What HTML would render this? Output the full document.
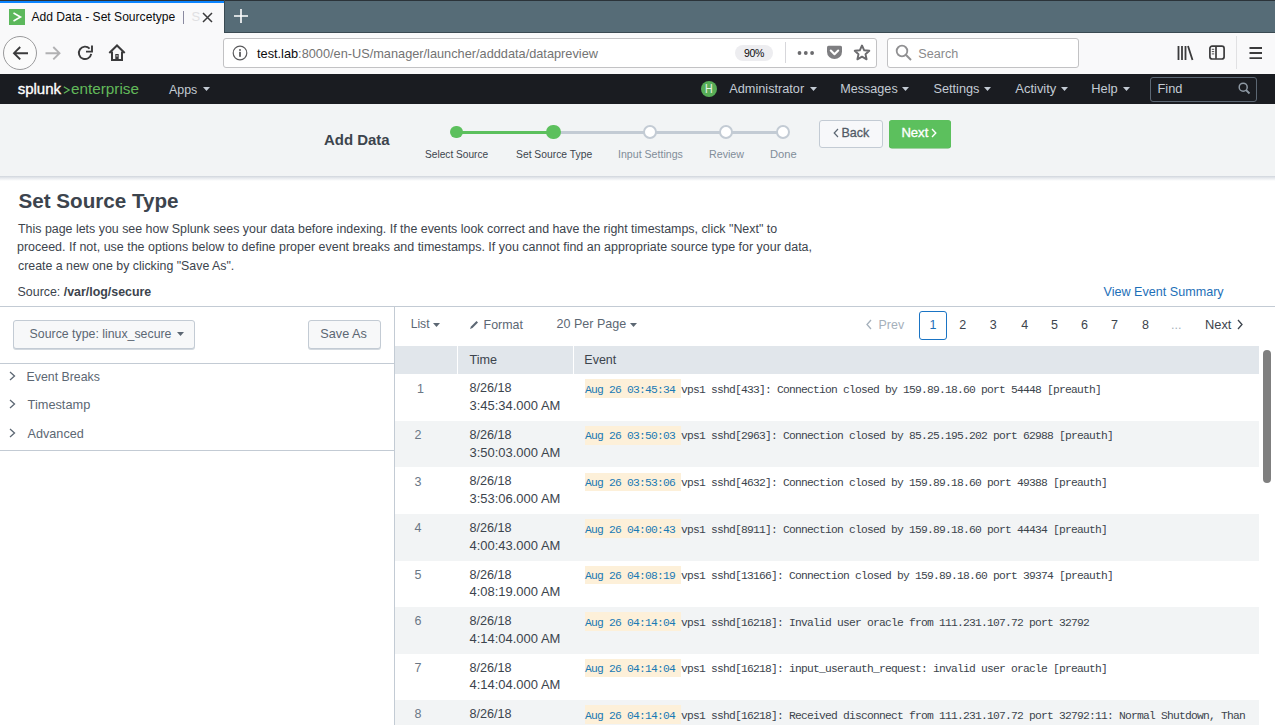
<!DOCTYPE html><html><head><meta charset="utf-8"><style>html,body{margin:0;padding:0;width:1275px;height:725px;overflow:hidden;background:#fff;position:relative}.t{position:absolute;white-space:nowrap;line-height:1;margin:0}</style></head><body><div style="position:absolute;left:0px;top:0px;width:1275px;height:33px;background:#566c77"></div><div style="position:absolute;left:0px;top:0px;width:1275px;height:1px;background:#2b3339"></div><div style="position:absolute;left:224px;top:32px;width:1051px;height:1px;background:#3a4a52"></div><div style="position:absolute;left:0px;top:0px;width:224px;height:33px;background:#f9f9fa"></div><div style="position:absolute;left:0px;top:1px;width:224px;height:2px;background:#0a84ff"></div><div style="position:absolute;left:0px;top:0px;width:224px;height:1px;background:#2b3339"></div><div style="position:absolute;left:224px;top:0px;width:1px;height:33px;background:#3a4a52"></div><div style="position:absolute;left:9px;top:9px;width:16px;height:16px;background:#5cb85c"></div><svg style="position:absolute;left:9px;top:9px;" width="16" height="16" viewBox="0 0 16 16"><path d="M4.5 4 L11.5 8 L4.5 12" fill="none" stroke="#fff" stroke-width="1.6"/></svg><div style="position:absolute;left:182.5px;top:11px;width:1.2px;height:13px;background:#8a8aa0"></div><svg style="position:absolute;left:202px;top:12px;" width="11" height="11" viewBox="0 0 11 11"><path d="M1 1 L10 10 M10 1 L1 10" stroke="#3b3b3c" stroke-width="1.5"/></svg><svg style="position:absolute;left:234px;top:9px;" width="14" height="14" viewBox="0 0 14 14"><path d="M7 0 V14 M0 7 H14" stroke="#fff" stroke-width="1.6"/></svg><div style="position:absolute;left:0px;top:33px;width:1275px;height:41px;background:#f9f9fa"></div><div style="position:absolute;left:3px;top:36px;width:34px;height:34px;border:1px solid #9a9a9c;border-radius:50%;background:#fbfbfb;box-sizing:border-box"></div><svg style="position:absolute;left:12px;top:46px;" width="17" height="15" viewBox="0 0 17 15"><path d="M2 7.2 H16 M8.2 1 L2 7.2 L8.2 13.4" fill="none" stroke="#3b3b3c" stroke-width="1.9"/></svg><svg style="position:absolute;left:45px;top:46px;" width="17" height="15" viewBox="0 0 17 15"><path d="M0.5 7.2 H14.5 M8.3 1 L14.5 7.2 L8.3 13.4" fill="none" stroke="#b1b1b3" stroke-width="1.9"/></svg><svg style="position:absolute;left:77px;top:44px;" width="17" height="17" viewBox="0 0 17 17"><path d="M14.2 9.8 A6.2 6.2 0 1 1 12.6 4.6" fill="none" stroke="#3b3b3c" stroke-width="1.9"/><path d="M15 1.5 V7.6 H9" fill="none" stroke="#3b3b3c" stroke-width="1.9"/></svg><svg style="position:absolute;left:108px;top:44px;" width="18" height="18" viewBox="0 0 18 18"><path d="M1.3 9 L9 1.5 L16.7 9" fill="none" stroke="#3b3b3c" stroke-width="2"/><path d="M4 7.5 V16 H14 V7.5" fill="none" stroke="#3b3b3c" stroke-width="2"/><rect x="7.3" y="10" width="3.4" height="6" fill="#3b3b3c"/><rect x="8.4" y="11.3" width="1.2" height="1.2" fill="#fff"/></svg><div style="position:absolute;left:223px;top:38px;width:654px;height:30px;border:1px solid #c2c2c4;border-radius:3px;background:#fff;box-sizing:border-box"></div><svg style="position:absolute;left:232px;top:45px;" width="16" height="16" viewBox="0 0 16 16"><circle cx="8" cy="8" r="6.8" fill="none" stroke="#5a5a5c" stroke-width="1.2"/><circle cx="8" cy="4.9" r="1" fill="#5a5a5c"/><rect x="7.1" y="6.8" width="1.8" height="5" fill="#5a5a5c"/></svg><div style="position:absolute;left:735px;top:45px;width:38px;height:16px;border-radius:8px;background:#ededf0"></div><div style="position:absolute;left:785px;top:42px;width:1px;height:21px;background:#d7d7db"></div><svg style="position:absolute;left:797px;top:49px;" width="18" height="8" viewBox="0 0 18 8"><circle cx="2.5" cy="4" r="1.9" fill="#6b6b6e"/><circle cx="8.8" cy="4" r="1.9" fill="#6b6b6e"/><circle cx="15.1" cy="4" r="1.9" fill="#6b6b6e"/></svg><svg style="position:absolute;left:825.5px;top:45px;" width="17" height="15" viewBox="0 0 17 15"><path d="M1 2.3 Q1 0.8 2.5 0.8 H14.5 Q16 0.8 16 2.3 V6.8 A7.5 7.3 0 0 1 1 6.8 Z" fill="#7e7e81"/><path d="M4.8 5.6 L8.5 9.2 L12.2 5.6" fill="none" stroke="#fff" stroke-width="2.1" stroke-linecap="round" stroke-linejoin="round"/></svg><svg style="position:absolute;left:853px;top:44px;" width="18" height="17" viewBox="0 0 18 17"><path d="M9 1.5 L11.2 6.3 L16.3 6.8 L12.5 10.2 L13.6 15.3 L9 12.7 L4.4 15.3 L5.5 10.2 L1.7 6.8 L6.8 6.3 Z" fill="none" stroke="#6b6b6e" stroke-width="1.9" stroke-linejoin="round"/></svg><div style="position:absolute;left:887px;top:38px;width:192px;height:30px;border:1px solid #c2c2c4;border-radius:3px;background:#fff;box-sizing:border-box"></div><svg style="position:absolute;left:895px;top:44px;" width="18" height="18" viewBox="0 0 18 18"><circle cx="7" cy="7" r="5.3" fill="none" stroke="#909092" stroke-width="1.8"/><path d="M10.8 10.8 L16 16" stroke="#909092" stroke-width="2"/></svg><svg style="position:absolute;left:1177px;top:45px;" width="17" height="16" viewBox="0 0 17 16"><path d="M1.5 1 V15 M5 1 V15 M8.5 1 V15 M11 1 L15.5 15" fill="none" stroke="#3b3b3c" stroke-width="1.8"/></svg><svg style="position:absolute;left:1208px;top:45px;" width="18" height="16" viewBox="0 0 18 16"><rect x="1.9" y="1.2" width="14.2" height="12.8" rx="2.3" fill="none" stroke="#3b3b3c" stroke-width="1.7"/><path d="M8 1.5 V13.8" stroke="#3b3b3c" stroke-width="1.7"/><path d="M3.8 4.3 H6.2 M3.8 6.6 H6.2 M3.8 8.9 H6.2" stroke="#3b3b3c" stroke-width="0.9"/></svg><div style="position:absolute;left:1236px;top:36px;width:1px;height:33px;background:#e1e1e3"></div><svg style="position:absolute;left:1249px;top:46px;" width="14" height="14" viewBox="0 0 14 14"><path d="M0.5 2 H13 M0.5 7 H13 M0.5 12.2 H13" stroke="#3b3b3c" stroke-width="1.8"/></svg><div style="position:absolute;left:0px;top:74px;width:1275px;height:30px;background:#1a1c21"></div><svg style="position:absolute;left:63px;top:86px;" width="7" height="8" viewBox="0 0 7 8"><path d="M0.8 0.8 L6.2 4 L0.8 7.2" fill="none" stroke="#62b95a" stroke-width="1.2"/></svg><svg style="position:absolute;left:202.5px;top:87px;" width="7" height="4" viewBox="0 0 7 4"><path d="M0 0 H7 L3.5 4 Z" fill="#c3cbd4"/></svg><div style="position:absolute;left:701px;top:81px;width:16px;height:16px;background:#57ad57;border-radius:50%"></div><svg style="position:absolute;left:810px;top:87px;" width="7" height="4" viewBox="0 0 7 4"><path d="M0 0 H7 L3.5 4 Z" fill="#c3cbd4"/></svg><svg style="position:absolute;left:902px;top:87px;" width="7" height="4" viewBox="0 0 7 4"><path d="M0 0 H7 L3.5 4 Z" fill="#c3cbd4"/></svg><svg style="position:absolute;left:984px;top:87px;" width="7" height="4" viewBox="0 0 7 4"><path d="M0 0 H7 L3.5 4 Z" fill="#c3cbd4"/></svg><svg style="position:absolute;left:1061px;top:87px;" width="7" height="4" viewBox="0 0 7 4"><path d="M0 0 H7 L3.5 4 Z" fill="#c3cbd4"/></svg><svg style="position:absolute;left:1122.5px;top:87px;" width="7" height="4" viewBox="0 0 7 4"><path d="M0 0 H7 L3.5 4 Z" fill="#c3cbd4"/></svg><div style="position:absolute;left:1150px;top:77px;width:107px;height:25px;border:1px solid #5c6773;border-radius:3px;box-sizing:border-box"></div><svg style="position:absolute;left:1238px;top:82px;" width="13" height="13" viewBox="0 0 13 13"><circle cx="5.2" cy="5.2" r="4" fill="none" stroke="#8e99a4" stroke-width="1.5"/><path d="M8 8 L11.5 11.5" stroke="#8e99a4" stroke-width="1.8"/></svg><div style="position:absolute;left:0px;top:104px;width:1275px;height:72px;background:#f2f4f5"></div><div style="position:absolute;left:0px;top:176px;width:1275px;height:5px;background:linear-gradient(#d0d5dc,#e6e9ed 40%,#fff)"></div><div style="position:absolute;left:456px;top:130.5px;width:97px;height:3px;background:#5cc05d"></div><div style="position:absolute;left:553px;top:130.5px;width:230px;height:3px;background:#c3cbd4"></div><div style="position:absolute;left:450.1px;top:125.6px;width:12.8px;height:12.8px;border-radius:50%;background:#5cc05d"></div><div style="position:absolute;left:545.9px;top:124.6px;width:14.8px;height:14.8px;border-radius:50%;background:#5cc05d"></div><div style="position:absolute;left:642.7px;top:125px;width:14px;height:14px;border-radius:50%;background:#fff;border:2.2px solid #c3cbd4;box-sizing:border-box"></div><div style="position:absolute;left:718.6px;top:125px;width:14px;height:14px;border-radius:50%;background:#fff;border:2.2px solid #c3cbd4;box-sizing:border-box"></div><div style="position:absolute;left:775.7px;top:125px;width:14px;height:14px;border-radius:50%;background:#fff;border:2.2px solid #c3cbd4;box-sizing:border-box"></div><div style="position:absolute;left:819px;top:120px;width:64px;height:28px;border:1px solid #c3cbd4;border-radius:3px;background:#f7f8fa;box-sizing:border-box"></div><svg style="position:absolute;left:832.5px;top:127.5px;" width="6" height="10" viewBox="0 0 6 10"><path d="M5 1 L1.2 5 L5 9" fill="none" stroke="#5c6773" stroke-width="1.2"/></svg><div style="position:absolute;left:889px;top:120px;width:62px;height:28px;border-radius:3px;background:#5cc05d;box-shadow:0 0.6px 0 #4fae4f"></div><svg style="position:absolute;left:931px;top:127.5px;" width="6" height="10" viewBox="0 0 6 10"><path d="M1 1 L4.8 5 L1 9" fill="none" stroke="#fff" stroke-width="1.4"/></svg><div style="position:absolute;left:0px;top:306px;width:1275px;height:1px;background:#c3cbd4"></div><div style="position:absolute;left:394px;top:307px;width:1px;height:418px;background:#c3cbd4"></div><div style="position:absolute;left:13px;top:320px;width:182px;height:28.6px;border:1px solid #c3cbd4;border-radius:3px;background:#f7f8f9;box-sizing:border-box;box-shadow:0 1px 0 #d3d9df"></div><svg style="position:absolute;left:176.5px;top:332px;" width="7" height="4" viewBox="0 0 7 4"><path d="M0 0 H7 L3.5 4 Z" fill="#5c6773"/></svg><div style="position:absolute;left:308px;top:320px;width:73px;height:28.6px;border:1px solid #c3cbd4;border-radius:3px;background:#f7f8f9;box-sizing:border-box;box-shadow:0 1px 0 #d3d9df"></div><div style="position:absolute;left:0px;top:363px;width:394px;height:1px;background:#c3cbd4"></div><svg style="position:absolute;left:9px;top:370.5px;" width="7" height="10" viewBox="0 0 7 10"><path d="M1 1 L5.5 5 L1 9" fill="none" stroke="#5c6773" stroke-width="1.3"/></svg><svg style="position:absolute;left:9px;top:399.4px;" width="7" height="10" viewBox="0 0 7 10"><path d="M1 1 L5.5 5 L1 9" fill="none" stroke="#5c6773" stroke-width="1.3"/></svg><svg style="position:absolute;left:9px;top:428.4px;" width="7" height="10" viewBox="0 0 7 10"><path d="M1 1 L5.5 5 L1 9" fill="none" stroke="#5c6773" stroke-width="1.3"/></svg><div style="position:absolute;left:0px;top:450px;width:394px;height:1px;background:#c3cbd4"></div><svg style="position:absolute;left:433px;top:322.5px;" width="7" height="4" viewBox="0 0 7 4"><path d="M0 0 H7 L3.5 4 Z" fill="#5c6773"/></svg><svg style="position:absolute;left:469px;top:320px;" width="10" height="10" viewBox="0 0 10 10"><path d="M1 9 L2 6.5 L7.5 1 L9 2.5 L3.5 8 Z" fill="#5c6773"/></svg><svg style="position:absolute;left:630px;top:322.5px;" width="7" height="4" viewBox="0 0 7 4"><path d="M0 0 H7 L3.5 4 Z" fill="#5c6773"/></svg><svg style="position:absolute;left:866px;top:319px;" width="6" height="11" viewBox="0 0 6 11"><path d="M5 1 L1 5.5 L5 10" fill="none" stroke="#a5b0bb" stroke-width="1.3"/></svg><div style="position:absolute;left:919px;top:311px;width:28px;height:29px;border:1.5px solid #1a74c4;border-radius:3px;box-sizing:border-box"></div><svg style="position:absolute;left:1237px;top:319px;" width="6" height="11" viewBox="0 0 6 11"><path d="M1 1 L5 5.5 L1 10" fill="none" stroke="#3c444d" stroke-width="1.3"/></svg><div style="position:absolute;left:395px;top:346px;width:864px;height:28.4px;background:#e1e6eb"></div><div style="position:absolute;left:457px;top:346px;width:1px;height:28.4px;background:#fff"></div><div style="position:absolute;left:573px;top:346px;width:1px;height:28.4px;background:#fff"></div><div style="position:absolute;left:585px;top:379.4px;width:96px;height:18.7px;background:#fdf0d9"></div><div style="position:absolute;left:395px;top:420.95px;width:864px;height:46.55px;background:#f2f4f5"></div><div style="position:absolute;left:585px;top:425.95px;width:96px;height:18.7px;background:#fdf0d9"></div><div style="position:absolute;left:585px;top:472.5px;width:96px;height:18.7px;background:#fdf0d9"></div><div style="position:absolute;left:395px;top:514.05px;width:864px;height:46.55px;background:#f2f4f5"></div><div style="position:absolute;left:585px;top:519.05px;width:96px;height:18.7px;background:#fdf0d9"></div><div style="position:absolute;left:585px;top:565.6px;width:96px;height:18.7px;background:#fdf0d9"></div><div style="position:absolute;left:395px;top:607.15px;width:864px;height:46.55px;background:#f2f4f5"></div><div style="position:absolute;left:585px;top:612.15px;width:96px;height:18.7px;background:#fdf0d9"></div><div style="position:absolute;left:585px;top:658.7px;width:96px;height:18.7px;background:#fdf0d9"></div><div style="position:absolute;left:395px;top:700.25px;width:864px;height:46.55px;background:#f2f4f5"></div><div style="position:absolute;left:585px;top:705.25px;width:96px;height:18.7px;background:#fdf0d9"></div><div style="position:absolute;left:1263px;top:350px;width:8px;height:133px;background:#7f7f7f;border-radius:4px"></div><div class="t" id="t0" style="left:31.40px;top:10.56px;font-family:'Liberation Sans', sans-serif;font-size:12.103px;font-weight:400;color:#0c0c0d;">Add Data - Set Sourcetype</div><div class="t" id="t1" style="left:191.50px;top:9.80px;font-family:'Liberation Sans', sans-serif;font-size:13.000px;font-weight:400;color:#e0e0e2;">S</div><div class="t" id="t2" style="left:257.00px;top:47.70px;font-family:'Liberation Sans', sans-serif;font-size:12.761px;font-weight:400;color:#0c0c0d;">test.lab<span style="color:#737373">:8000/en-US/manager/launcher/adddata/datapreview</span></div><div class="t" id="t3" style="left:744.00px;top:47.71px;font-family:'Liberation Sans', sans-serif;font-size:10.500px;font-weight:400;color:#0c0c0d;letter-spacing:-0.4px">90%</div><div class="t" id="t4" style="left:918.33px;top:48.33px;font-family:'Liberation Sans', sans-serif;font-size:12.610px;font-weight:400;color:#8a8a8c;">Search</div><div class="t" id="t5" style="left:17.66px;top:81.27px;font-family:'Liberation Sans', sans-serif;font-size:15.040px;font-weight:400;color:#fff;-webkit-text-stroke:0.35px #fff">splunk</div><div class="t" id="t6" style="left:71.00px;top:81.05px;font-family:'Liberation Sans', sans-serif;font-size:15.301px;font-weight:400;color:#62b95a;">enterprise</div><div class="t" id="t7" style="left:169.00px;top:83.61px;font-family:'Liberation Sans', sans-serif;font-size:12.393px;font-weight:400;color:#c3cbd4;">Apps</div><div class="t" id="t8" style="left:704.50px;top:83.23px;font-family:'Liberation Sans', sans-serif;font-size:12.600px;font-weight:400;color:#e8f4e8;transform:scaleX(0.85);transform-origin:0 0">H</div><div class="t" id="t9" style="left:729.30px;top:83.34px;font-family:'Liberation Sans', sans-serif;font-size:12.713px;font-weight:400;color:#c3cbd4;">Administrator</div><div class="t" id="t10" style="left:840.23px;top:82.82px;font-family:'Liberation Sans', sans-serif;font-size:12.619px;font-weight:400;color:#c3cbd4;">Messages</div><div class="t" id="t11" style="left:933.42px;top:83.31px;font-family:'Liberation Sans', sans-serif;font-size:12.746px;font-weight:400;color:#c3cbd4;">Settings</div><div class="t" id="t12" style="left:1015.30px;top:83.12px;font-family:'Liberation Sans', sans-serif;font-size:12.968px;font-weight:400;color:#c3cbd4;">Activity</div><div class="t" id="t13" style="left:1091.31px;top:83.22px;font-family:'Liberation Sans', sans-serif;font-size:12.850px;font-weight:400;color:#c3cbd4;">Help</div><div class="t" id="t14" style="left:1157.51px;top:83.23px;font-family:'Liberation Sans', sans-serif;font-size:12.837px;font-weight:400;color:#c3cbd4;">Find</div><div class="t" id="t15" style="left:324.00px;top:132.03px;font-family:'Liberation Sans', sans-serif;font-size:15.200px;font-weight:700;color:#3c444d;transform:scaleX(0.9851);transform-origin:0 0;">Add Data</div><div class="t" id="t16" style="left:425.00px;top:148.38px;font-family:'Liberation Sans', sans-serif;font-size:11.600px;font-weight:400;color:#3c444d;transform:scaleX(0.8750);transform-origin:0 0;">Select Source</div><div class="t" id="t17" style="left:516.00px;top:148.38px;font-family:'Liberation Sans', sans-serif;font-size:11.600px;font-weight:400;color:#3c444d;transform:scaleX(0.8906);transform-origin:0 0;">Set Source Type</div><div class="t" id="t18" style="left:618.09px;top:148.38px;font-family:'Liberation Sans', sans-serif;font-size:11.600px;font-weight:400;color:#818d99;transform:scaleX(0.9143);transform-origin:0 0;">Input Settings</div><div class="t" id="t19" style="left:708.68px;top:148.38px;font-family:'Liberation Sans', sans-serif;font-size:11.600px;font-weight:400;color:#818d99;transform:scaleX(0.9216);transform-origin:0 0;">Review</div><div class="t" id="t20" style="left:770.04px;top:148.38px;font-family:'Liberation Sans', sans-serif;font-size:11.600px;font-weight:400;color:#818d99;transform:scaleX(0.9630);transform-origin:0 0;">Done</div><div class="t" id="t21" style="left:841.44px;top:126.99px;font-family:'Liberation Sans', sans-serif;font-size:12.536px;font-weight:400;color:#515a66;-webkit-text-stroke:0.3px #515a66">Back</div><div class="t" id="t22" style="left:901.39px;top:125.71px;font-family:'Liberation Sans', sans-serif;font-size:13.104px;font-weight:400;color:#fff;-webkit-text-stroke:0.35px #fff">Next</div><div class="t" id="t23" style="left:18.50px;top:191.32px;font-family:'Liberation Sans', sans-serif;font-size:20.645px;font-weight:700;color:#3c444d;">Set Source Type</div><div class="t" id="t24" style="left:18.00px;top:223.48px;font-family:'Liberation Sans', sans-serif;font-size:12.428px;font-weight:400;color:#3c444d;">This page lets you see how Splunk sees your data before indexing. If the events look correct and have the right timestamps, click "Next" to</div><div class="t" id="t25" style="left:17.00px;top:241.44px;font-family:'Liberation Sans', sans-serif;font-size:12.475px;font-weight:400;color:#3c444d;">proceed. If not, use the options below to define proper event breaks and timestamps. If you cannot find an appropriate source type for your data,</div><div class="t" id="t26" style="left:18.00px;top:259.54px;font-family:'Liberation Sans', sans-serif;font-size:12.362px;font-weight:400;color:#3c444d;">create a new one by clicking "Save As".</div><div class="t" id="t27" style="left:17.61px;top:286.10px;font-family:'Liberation Sans', sans-serif;font-size:12.407px;font-weight:400;color:#3c444d;">Source: <b>/var/log/secure</b></div><div class="t" id="t28" style="left:1103.50px;top:286.33px;font-family:'Liberation Sans', sans-serif;font-size:12.605px;font-weight:400;color:#1d6fb8;">View Event Summary</div><div class="t" id="t29" style="left:29.61px;top:327.55px;font-family:'Liberation Sans', sans-serif;font-size:12.343px;font-weight:400;color:#5c6773;">Source type: linux_secure</div><div class="t" id="t30" style="left:320.28px;top:328.05px;font-family:'Liberation Sans', sans-serif;font-size:12.694px;font-weight:400;color:#5c6773;">Save As</div><div class="t" id="t31" style="left:26.61px;top:370.56px;font-family:'Liberation Sans', sans-serif;font-size:12.329px;font-weight:400;color:#5c6773;">Event Breaks</div><div class="t" id="t32" style="left:27.60px;top:399.08px;font-family:'Liberation Sans', sans-serif;font-size:12.787px;font-weight:400;color:#5c6773;">Timestamp</div><div class="t" id="t33" style="left:27.60px;top:428.20px;font-family:'Liberation Sans', sans-serif;font-size:12.636px;font-weight:400;color:#5c6773;">Advanced</div><div class="t" id="t34" style="left:410.63px;top:318.10px;font-family:'Liberation Sans', sans-serif;font-size:12.171px;font-weight:400;color:#5c6773;">List</div><div class="t" id="t35" style="left:483.61px;top:318.67px;font-family:'Liberation Sans', sans-serif;font-size:12.436px;font-weight:400;color:#5c6773;">Format</div><div class="t" id="t36" style="left:556.60px;top:317.79px;font-family:'Liberation Sans', sans-serif;font-size:12.536px;font-weight:400;color:#5c6773;">20 Per Page</div><div class="t" id="t37" style="left:878.61px;top:318.50px;font-family:'Liberation Sans', sans-serif;font-size:12.400px;font-weight:400;color:#a5b0bb;">Prev</div><div class="t" id="t38" style="left:929.50px;top:319.42px;font-family:'Liberation Sans', sans-serif;font-size:12.500px;font-weight:400;color:#1d6fb8;">1</div><div class="t" id="t39" style="left:959.20px;top:319.42px;font-family:'Liberation Sans', sans-serif;font-size:12.500px;font-weight:400;color:#3c444d;">2</div><div class="t" id="t40" style="left:989.80px;top:319.42px;font-family:'Liberation Sans', sans-serif;font-size:12.500px;font-weight:400;color:#3c444d;">3</div><div class="t" id="t41" style="left:1021.20px;top:319.42px;font-family:'Liberation Sans', sans-serif;font-size:12.500px;font-weight:400;color:#3c444d;">4</div><div class="t" id="t42" style="left:1051.00px;top:319.42px;font-family:'Liberation Sans', sans-serif;font-size:12.500px;font-weight:400;color:#3c444d;">5</div><div class="t" id="t43" style="left:1081.10px;top:319.42px;font-family:'Liberation Sans', sans-serif;font-size:12.500px;font-weight:400;color:#3c444d;">6</div><div class="t" id="t44" style="left:1111.10px;top:319.42px;font-family:'Liberation Sans', sans-serif;font-size:12.500px;font-weight:400;color:#3c444d;">7</div><div class="t" id="t45" style="left:1141.90px;top:319.42px;font-family:'Liberation Sans', sans-serif;font-size:12.500px;font-weight:400;color:#3c444d;">8</div><div class="t" id="t46" style="left:1171.00px;top:319.42px;font-family:'Liberation Sans', sans-serif;font-size:12.500px;font-weight:400;color:#a5b0bb;">...</div><div class="t" id="t47" style="left:1204.97px;top:319.12px;font-family:'Liberation Sans', sans-serif;font-size:12.850px;font-weight:400;color:#3c444d;">Next</div><div class="t" id="t48" style="left:469.50px;top:353.90px;font-family:'Liberation Sans', sans-serif;font-size:12.639px;font-weight:400;color:#3c444d;">Time</div><div class="t" id="t49" style="left:584.30px;top:354.02px;font-family:'Liberation Sans', sans-serif;font-size:12.500px;font-weight:400;color:#3c444d;">Event</div><div class="t" id="t50" style="left:417.00px;top:382.52px;font-family:'Liberation Sans', sans-serif;font-size:12.500px;font-weight:400;color:#6b7785;">1</div><div class="t" id="t51" style="left:469.50px;top:382.39px;font-family:'Liberation Sans', sans-serif;font-size:12.649px;font-weight:400;color:#3c444d;">8/26/18</div><div class="t" id="t52" style="left:469.50px;top:400.12px;font-family:'Liberation Sans', sans-serif;font-size:12.974px;font-weight:400;color:#3c444d;">3:45:34.000 AM</div><div class="t" id="t53" style="left:585.00px;top:384.93px;font-family:'Liberation Mono', monospace;font-size:11.300px;font-weight:400;color:#3c444d;letter-spacing:-0.78px"><span style="color:#1a7ab5">Aug 26 03:45:34 </span>vps1 sshd[433]: Connection closed by 159.89.18.60 port 54448 [preauth]</div><div class="t" id="t54" style="left:414.60px;top:429.07px;font-family:'Liberation Sans', sans-serif;font-size:12.500px;font-weight:400;color:#6b7785;">2</div><div class="t" id="t55" style="left:469.50px;top:428.94px;font-family:'Liberation Sans', sans-serif;font-size:12.649px;font-weight:400;color:#3c444d;">8/26/18</div><div class="t" id="t56" style="left:469.50px;top:446.67px;font-family:'Liberation Sans', sans-serif;font-size:12.974px;font-weight:400;color:#3c444d;">3:50:03.000 AM</div><div class="t" id="t57" style="left:585.00px;top:431.48px;font-family:'Liberation Mono', monospace;font-size:11.300px;font-weight:400;color:#3c444d;letter-spacing:-0.78px"><span style="color:#1a7ab5">Aug 26 03:50:03 </span>vps1 sshd[2963]: Connection closed by 85.25.195.202 port 62988 [preauth]</div><div class="t" id="t58" style="left:414.60px;top:475.62px;font-family:'Liberation Sans', sans-serif;font-size:12.500px;font-weight:400;color:#6b7785;">3</div><div class="t" id="t59" style="left:469.50px;top:475.49px;font-family:'Liberation Sans', sans-serif;font-size:12.649px;font-weight:400;color:#3c444d;">8/26/18</div><div class="t" id="t60" style="left:469.50px;top:493.22px;font-family:'Liberation Sans', sans-serif;font-size:12.974px;font-weight:400;color:#3c444d;">3:53:06.000 AM</div><div class="t" id="t61" style="left:585.00px;top:478.03px;font-family:'Liberation Mono', monospace;font-size:11.300px;font-weight:400;color:#3c444d;letter-spacing:-0.78px"><span style="color:#1a7ab5">Aug 26 03:53:06 </span>vps1 sshd[4632]: Connection closed by 159.89.18.60 port 49388 [preauth]</div><div class="t" id="t62" style="left:414.60px;top:522.17px;font-family:'Liberation Sans', sans-serif;font-size:12.500px;font-weight:400;color:#6b7785;">4</div><div class="t" id="t63" style="left:469.50px;top:522.04px;font-family:'Liberation Sans', sans-serif;font-size:12.649px;font-weight:400;color:#3c444d;">8/26/18</div><div class="t" id="t64" style="left:469.50px;top:539.77px;font-family:'Liberation Sans', sans-serif;font-size:12.974px;font-weight:400;color:#3c444d;">4:00:43.000 AM</div><div class="t" id="t65" style="left:585.00px;top:524.58px;font-family:'Liberation Mono', monospace;font-size:11.300px;font-weight:400;color:#3c444d;letter-spacing:-0.78px"><span style="color:#1a7ab5">Aug 26 04:00:43 </span>vps1 sshd[8911]: Connection closed by 159.89.18.60 port 44434 [preauth]</div><div class="t" id="t66" style="left:414.60px;top:568.72px;font-family:'Liberation Sans', sans-serif;font-size:12.500px;font-weight:400;color:#6b7785;">5</div><div class="t" id="t67" style="left:469.50px;top:568.59px;font-family:'Liberation Sans', sans-serif;font-size:12.649px;font-weight:400;color:#3c444d;">8/26/18</div><div class="t" id="t68" style="left:469.50px;top:586.32px;font-family:'Liberation Sans', sans-serif;font-size:12.974px;font-weight:400;color:#3c444d;">4:08:19.000 AM</div><div class="t" id="t69" style="left:585.00px;top:571.13px;font-family:'Liberation Mono', monospace;font-size:11.300px;font-weight:400;color:#3c444d;letter-spacing:-0.78px"><span style="color:#1a7ab5">Aug 26 04:08:19 </span>vps1 sshd[13166]: Connection closed by 159.89.18.60 port 39374 [preauth]</div><div class="t" id="t70" style="left:414.60px;top:615.27px;font-family:'Liberation Sans', sans-serif;font-size:12.500px;font-weight:400;color:#6b7785;">6</div><div class="t" id="t71" style="left:469.50px;top:615.14px;font-family:'Liberation Sans', sans-serif;font-size:12.649px;font-weight:400;color:#3c444d;">8/26/18</div><div class="t" id="t72" style="left:469.50px;top:632.87px;font-family:'Liberation Sans', sans-serif;font-size:12.974px;font-weight:400;color:#3c444d;">4:14:04.000 AM</div><div class="t" id="t73" style="left:585.00px;top:617.68px;font-family:'Liberation Mono', monospace;font-size:11.300px;font-weight:400;color:#3c444d;letter-spacing:-0.78px"><span style="color:#1a7ab5">Aug 26 04:14:04 </span>vps1 sshd[16218]: Invalid user oracle from 111.231.107.72 port 32792</div><div class="t" id="t74" style="left:414.60px;top:661.82px;font-family:'Liberation Sans', sans-serif;font-size:12.500px;font-weight:400;color:#6b7785;">7</div><div class="t" id="t75" style="left:469.50px;top:661.69px;font-family:'Liberation Sans', sans-serif;font-size:12.649px;font-weight:400;color:#3c444d;">8/26/18</div><div class="t" id="t76" style="left:469.50px;top:679.42px;font-family:'Liberation Sans', sans-serif;font-size:12.974px;font-weight:400;color:#3c444d;">4:14:04.000 AM</div><div class="t" id="t77" style="left:585.00px;top:664.23px;font-family:'Liberation Mono', monospace;font-size:11.300px;font-weight:400;color:#3c444d;letter-spacing:-0.78px"><span style="color:#1a7ab5">Aug 26 04:14:04 </span>vps1 sshd[16218]: input_userauth_request: invalid user oracle [preauth]</div><div class="t" id="t78" style="left:414.60px;top:708.37px;font-family:'Liberation Sans', sans-serif;font-size:12.500px;font-weight:400;color:#6b7785;">8</div><div class="t" id="t79" style="left:469.50px;top:708.24px;font-family:'Liberation Sans', sans-serif;font-size:12.649px;font-weight:400;color:#3c444d;">8/26/18</div><div class="t" id="t80" style="left:469.50px;top:725.97px;font-family:'Liberation Sans', sans-serif;font-size:12.974px;font-weight:400;color:#3c444d;">4:14:04.000 AM</div><div class="t" id="t81" style="left:585.00px;top:710.78px;font-family:'Liberation Mono', monospace;font-size:11.300px;font-weight:400;color:#3c444d;letter-spacing:-0.78px"><span style="color:#1a7ab5">Aug 26 04:14:04 </span>vps1 sshd[16218]: Received disconnect from 111.231.107.72 port 32792:11: Normal Shutdown, Than</div></body></html>
